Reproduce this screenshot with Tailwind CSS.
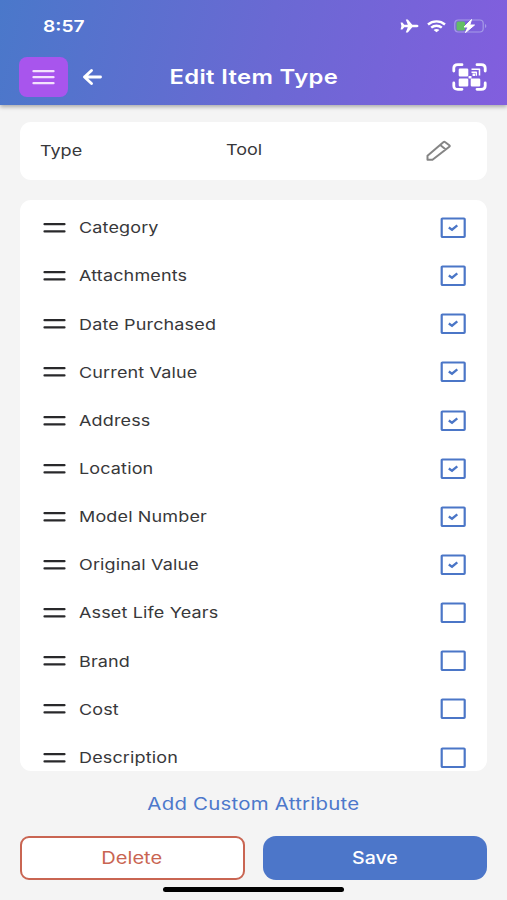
<!DOCTYPE html>
<html lang="en">
<head>
<meta charset="utf-8">
<title>Edit Item Type</title>
<script src="https://cdn.jsdelivr.net/npm/@tailwindcss/browser@4"></script>
</head>
<body class="w-[507px] h-[900px] overflow-hidden bg-[#f4f4f4] font-['Inter',sans-serif] text-[#38383a]">
<div class="relative flex h-[900px] flex-col">
  <header class="h-[105px] shrink-0 bg-[linear-gradient(103deg,#4a78ca_0%,#6a69d3_52%,#825ede_100%)] text-white shadow-[0_2px_4px_rgba(0,0,0,0.3)]">
    <div class="flex h-[52px] items-center justify-between pl-[43px] pr-[20px]">
      <span class="origin-left scale-x-[1.2] text-[16px] font-semibold">8:57</span>
      <div class="flex items-center gap-[8px]">
        <svg class="h-[14px] w-[19px]" viewBox="0 0 19 14" fill="#fff"><path d="M18.500 7c0 .8-1 1.300-2.300 1.300h-3.900L7.800 13.500H5.800l2-5.200H4.300L2.400 10.400H.6L1.400 7 .6 3.600h1.800l1.900 2.100h3.500l-2-5.200h2l4.500 5.200h3.900c1.300 0 2.300.5 2.300 1.300z"/></svg>
        <svg class="h-[13px] w-[19px]" viewBox="0 0 19 13" fill="none" stroke="#fff" stroke-width="2.400"><path d="M1 4.500C5.700.3 13.300.3 18 4.500M4.200 7.700c3-2.700 7.600-2.700 10.600 0"/><path d="M9.500 12.300 6.600 10c1.600-1.500 4.200-1.500 5.800 0z" fill="#fff" stroke="none"/></svg>
        <svg class="h-[14px] w-[33px]" viewBox="0 0 33 14" fill="none"><rect x=".8" y="1" width="28.400" height="12" rx="3.500" stroke="#a59be7" stroke-width="1.200"/><path d="M31 5v4c1.800-.6 1.800-3.400 0-4z" fill="#a59be7"/><rect x="2.500" y="2.500" width="8.500" height="9" rx="1.500" fill="#63bd66"/><path d="M17.500.5 10 8h4l-2.500 5.500L20.500 6h-4.700z" fill="#fff" stroke="#fff" stroke-width="1" stroke-linejoin="round"/></svg>
      </div>
    </div>
    <div class="relative flex h-[50px] items-center pl-[19px] pr-[20px]">
      <button class="flex h-[40px] w-[49px] items-center justify-center rounded-[8px] bg-[#a855ed]">
        <svg class="h-[16px] w-[23px]" viewBox="0 0 23 16" stroke="#f3e2fd" stroke-width="2.300" stroke-linecap="round"><path d="M1.500 2.200h20M1.500 8.200h20M1.500 14.200h20"/></svg>
      </button>
      <svg class="ml-[14px] h-[18px] w-[21px]" viewBox="0 0 21 18" fill="none" stroke="#fff" stroke-width="2.900" stroke-linecap="round" stroke-linejoin="round"><path d="M18.500 9H2.500M9.500 2.500 2.500 9l7 6.500"/></svg>
      <h1 class="absolute inset-x-0 text-center text-[20px] font-semibold"><span class="inline-block scale-x-[1.19] tracking-[0.300px]">Edit Item Type</span></h1>
      <svg class="ml-auto h-[28px] w-[35px]" viewBox="0 0 35 28" fill="none" stroke="#fff"><path stroke-width="2.800" stroke-linecap="round" d="M1.800 8V5Q1.800 1.700 5.800 1.700H10M25 1.700h4.200q4 0 4 3.300v3M33.200 20v3q0 3.300-4 3.300H25M10 26.300H5.800q-4 0-4-3.300v-3"/><path fill="#fff" stroke="none" d="M8 5.500h7q1.300 0 1.300 1.200v5.500q0 1.200-1.300 1.200H8q-1.300 0-1.300-1.200V6.700q0-1.200 1.300-1.200zM8 15.500h7q1.300 0 1.300 1.200v5.500q0 1.200-1.300 1.200H8q-1.300 0-1.300-1.200v-5.500q0-1.200 1.300-1.200zM20 15.500h7q1.300 0 1.300 1.200v5.500q0 1.200-1.300 1.200h-7q-1.300 0-1.300-1.200v-5.500q0-1.200 1.300-1.200zM16.500 13h3v2.500h-3zM20.500 10.500h2.500v2.500h-2.500z"/><path stroke-width="1.500" stroke-linejoin="round" d="M19.500 6.300h8v6.200M19.500 9.200h4.800v3.600"/></svg>
    </div>
  </header>

  <section class="mx-[20px] mt-[17px] flex h-[58px] shrink-0 items-center rounded-[11px] bg-white pl-[20px] pr-[36px] text-[15px]">
    <span class="w-[186px]"><span class="inline-block origin-left scale-x-[1.2]">Type</span></span>
    <span class="-mt-[2px] inline-block origin-left scale-x-[1.2]">Tool</span>
    <svg class="ml-auto h-[22px] w-[26px]" viewBox="0 0 26 22" fill="none" stroke="#858585" stroke-width="2" stroke-linejoin="round"><path d="M2.500 19.800v-4L18.300 2.200q1-.8 2 0l4 3q1 .8 0 1.600L7.500 19.800zM15.200 5l5.600 4.500"/></svg>
  </section>

  <section class="mx-[20px] mt-[20px] h-[571px] shrink-0 overflow-hidden rounded-[11px] bg-white pt-[4px]">
    <ul id="attributes"></ul>
  </section>

  <button class="mt-[20px] h-[26px] text-[17px] leading-[26px] text-[#4d78cb]"><span class="inline-block scale-x-[1.2] tracking-[0.200px]">Add Custom Attribute</span></button>

  <div class="mx-[20px] mt-[19px] grid h-[44px] grid-cols-2 gap-[18px] text-[17px]">
    <button class="rounded-[9px] border-2 border-[#c96552] bg-white pt-[1px] text-[#c96552]"><span class="inline-block scale-x-[1.18]">Delete</span></button>
    <button class="rounded-[13px] bg-[#4c76c9] pt-[1px] font-medium text-white"><span class="inline-block scale-x-[1.15]">Save</span></button>
  </div>
  <div class="absolute bottom-[8px] left-[163px] h-[5px] w-[181px] rounded-full bg-black"></div>
</div>

<template id="row">
  <li class="flex h-[48.15px] items-center pl-[23px] pr-[21px] text-[15px]">
    <svg class="h-[12px] w-[23px] shrink-0" viewBox="0 0 23 12" stroke="#29292b" stroke-width="2.200" stroke-linecap="round"><path d="M1.500 2.200h20M1.500 9.400h20"/></svg>
    <span class="label ml-[13px] origin-left scale-x-[1.2] whitespace-nowrap pt-[1px] tracking-[0.120px]"></span>
    <svg class="ml-auto h-[22px] w-[26px] shrink-0" viewBox="0 0 26 22" fill="none" stroke="#4b76c7"><rect x="1.700" y="1.500" width="23" height="18.500" rx=".7" stroke-width="2.200"/><path class="tick" stroke-width="2.300" d="m8.800 10.500 3.200 2.200 5.300-4.400"/></svg>
  </li>
</template>
<script>
  const attributes = [
    ["Category", true], ["Attachments", true], ["Date Purchased", true], ["Current Value", true],
    ["Address", true], ["Location", true], ["Model Number", true], ["Original Value", true],
    ["Asset Life Years", false], ["Brand", false], ["Cost", false], ["Description", false]
  ];
  const list = document.getElementById("attributes");
  const template = document.getElementById("row");
  for (const [name, checked] of attributes) {
    const row = template.content.cloneNode(true);
    row.querySelector(".label").textContent = name;
    if (!checked) row.querySelector(".tick").remove();
    list.append(row);
  }
</script>
</body>
</html>
